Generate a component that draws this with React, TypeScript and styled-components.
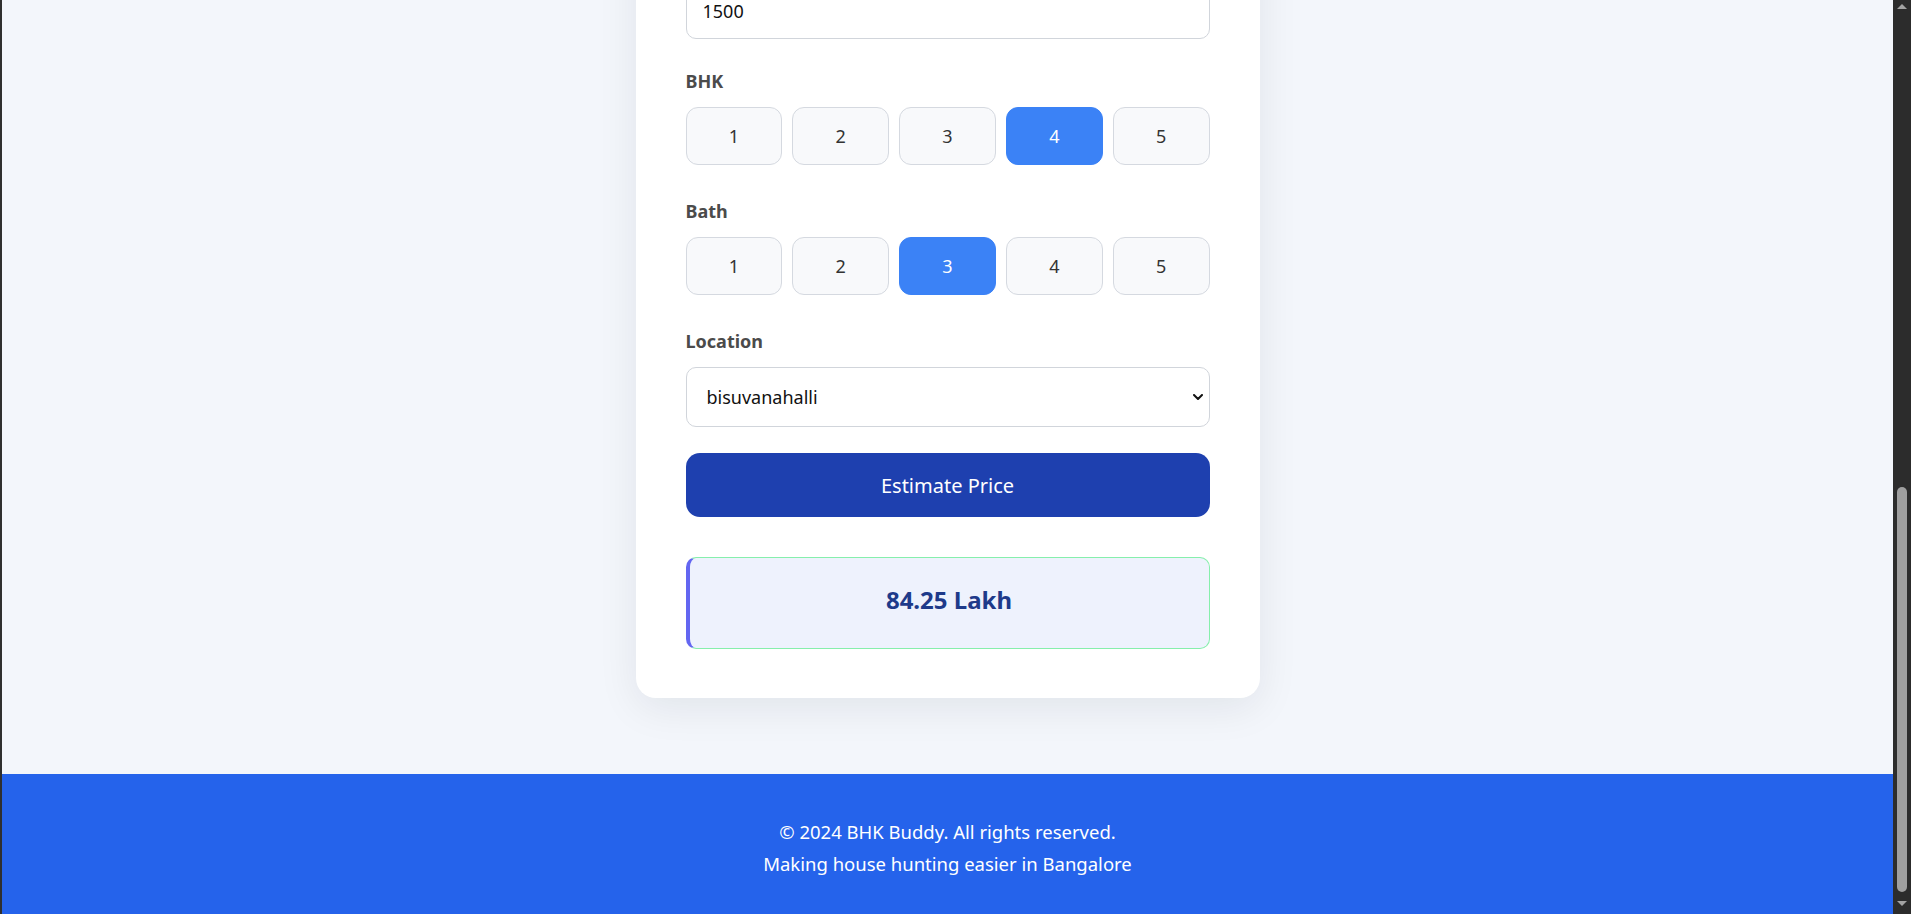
import React, { useState } from 'react';
import styled, { createGlobalStyle } from 'styled-components';

const GlobalStyle = createGlobalStyle`
  * {
    box-sizing: border-box;
  }

  html,
  body {
    margin: 0;
    padding: 0;
    overflow: hidden;
  }

  body {
    font-family: "Noto Sans", "Open Sans", Arial, sans-serif;
  }
`;

const Screen = styled.div`
  display: flex;
  height: 914px;
  overflow: hidden;
  background: #f3f6fb;
`;

const WindowEdge = styled.div`
  width: 2px;
  flex-shrink: 0;
  background: #2f2f2f;
`;

const Page = styled.div`
  flex: 1;
  min-width: 0;
  display: flex;
  flex-direction: column;
`;

const Main = styled.main`
  flex: 1;
  display: flex;
  justify-content: center;
  align-items: flex-start;
  background: #f3f6fb;
`;

// page is scrolled down, so the top of the card sits above the window
const Card = styled.div`
  width: 624px;
  margin-top: -67px;
  padding: 50px 50px 49px;
  background: #ffffff;
  border-radius: 20px;
  box-shadow: 0 10px 40px rgba(15, 23, 42, 0.08);
`;

const Field = styled.div<{ $mb?: number }>`
  margin-bottom: ${(p) => p.$mb ?? 34}px;
`;

const Label = styled.label`
  display: block;
  font-size: 18px;
  line-height: 24px;
  font-weight: 700;
  color: #4b4b4b;
  margin-bottom: 14px;
`;

const TextInput = styled.input`
  display: block;
  width: 100%;
  height: 56px;
  padding: 0 16px;
  border: 1px solid #d1d5db;
  border-radius: 10px;
  font-family: inherit;
  font-size: 18px;
  color: #111111;
  background: #ffffff;
  outline: none;
`;

const Options = styled.div`
  display: grid;
  grid-template-columns: repeat(5, 1fr);
  gap: 10px;
`;

const Option = styled.button<{ $active: boolean }>`
  height: 58px;
  border-radius: 12px;
  border: 1px solid ${(p) => (p.$active ? '#3b82f6' : '#d5d9e0')};
  background: ${(p) => (p.$active ? '#3b82f6' : '#f8f9fb')};
  color: ${(p) => (p.$active ? '#ffffff' : '#333333')};
  font-family: inherit;
  font-size: 18px;
  cursor: pointer;
`;

const SelectWrap = styled.div`
  position: relative;
`;

const Select = styled.select`
  display: block;
  width: 100%;
  height: 60px;
  padding: 0 40px 0 20px;
  border: 1px solid #d1d5db;
  border-radius: 10px;
  font-family: inherit;
  font-size: 18px;
  color: #111111;
  background: #ffffff;
  appearance: none;
  outline: none;
`;

const Chevron = styled.svg`
  position: absolute;
  right: 7px;
  top: 50%;
  margin-top: -3px;
  pointer-events: none;
`;

const EstimateButton = styled.button`
  display: block;
  width: 100%;
  height: 64px;
  border: none;
  border-radius: 14px;
  background: #1e40af;
  color: #ffffff;
  font-family: inherit;
  font-size: 20px;
  cursor: pointer;
  margin-bottom: 40px;
`;

const Result = styled.div`
  height: 92px;
  padding-bottom: 7px;
  display: flex;
  align-items: center;
  justify-content: center;
  background: #eef2fd;
  border: 1px solid #86efac;
  border-left: 4px solid #6366f1;
  border-radius: 10px;
  font-size: 24px;
  font-weight: 700;
  color: #1e3a8a;
`;

const Footer = styled.footer`
  height: 140px;
  flex-shrink: 0;
  padding: 42px 0 0;
  background: #2563eb;
  color: #ffffff;
  text-align: center;
`;

const FooterLine = styled.p`
  margin: 0;
  font-size: 18.5px;
  line-height: 32px;
`;

const Scrollbar = styled.div`
  width: 18px;
  flex-shrink: 0;
  background: #2c2c2c;
  display: flex;
  flex-direction: column;
  align-items: center;
`;

const ScrollArrow = styled.div<{ $down?: boolean }>`
  width: 0;
  height: 0;
  border-left: 5px solid transparent;
  border-right: 5px solid transparent;
  ${(p) =>
    p.$down
      ? 'border-top: 5px solid #a3a3a3; margin-bottom: 8px;'
      : 'border-bottom: 5px solid #a3a3a3; margin-top: 4px;'}
`;

const ScrollThumb = styled.div`
  width: 10px;
  height: 405px;
  margin-top: auto;
  margin-bottom: 9px;
  border-radius: 5px;
  background: #9f9f9f;
`;

const counts = [1, 2, 3, 4, 5];
const locations = [
  '1st phase jp nagar',
  'bellandur',
  'bisuvanahalli',
  'electronic city',
  'hebbal',
  'indira nagar',
  'koramangala',
  'rajaji nagar',
  'whitefield',
  'yelahanka',
];

const App: React.FC = () => {
  const [sqft, setSqft] = useState('1500');
  const [bhk, setBhk] = useState(4);
  const [bath, setBath] = useState(3);
  const [location, setLocation] = useState('bisuvanahalli');

  return (
    <>
      <GlobalStyle />
      <Screen>
        <WindowEdge />
        <Page>
          <Main>
            <Card>
              <Field $mb={30}>
                <TextInput value={sqft} onChange={(e) => setSqft(e.target.value)} />
              </Field>

              <Field>
                <Label>BHK</Label>
                <Options>
                  {counts.map((n) => (
                    <Option key={n} $active={bhk === n} onClick={() => setBhk(n)}>
                      {n}
                    </Option>
                  ))}
                </Options>
              </Field>

              <Field>
                <Label>Bath</Label>
                <Options>
                  {counts.map((n) => (
                    <Option key={n} $active={bath === n} onClick={() => setBath(n)}>
                      {n}
                    </Option>
                  ))}
                </Options>
              </Field>

              <Field $mb={26}>
                <Label>Location</Label>
                <SelectWrap>
                  <Select value={location} onChange={(e) => setLocation(e.target.value)}>
                    {locations.map((l) => (
                      <option key={l} value={l}>
                        {l}
                      </option>
                    ))}
                  </Select>
                  <Chevron width="10" height="6" viewBox="0 0 10 6">
                    <path d="M1 1l4 4 4-4" fill="none" stroke="#111" strokeWidth="2" strokeLinecap="round" strokeLinejoin="round" />
                  </Chevron>
                </SelectWrap>
              </Field>

              <EstimateButton>Estimate Price</EstimateButton>

              <Result>84.25 Lakh</Result>
            </Card>
          </Main>
          <Footer>
            <FooterLine>© 2024 BHK Buddy. All rights reserved.</FooterLine>
            <FooterLine>Making house hunting easier in Bangalore</FooterLine>
          </Footer>
        </Page>
        <Scrollbar>
          <ScrollArrow />
          <ScrollThumb />
          <ScrollArrow $down />
        </Scrollbar>
      </Screen>
    </>
  );
};

export default App;
